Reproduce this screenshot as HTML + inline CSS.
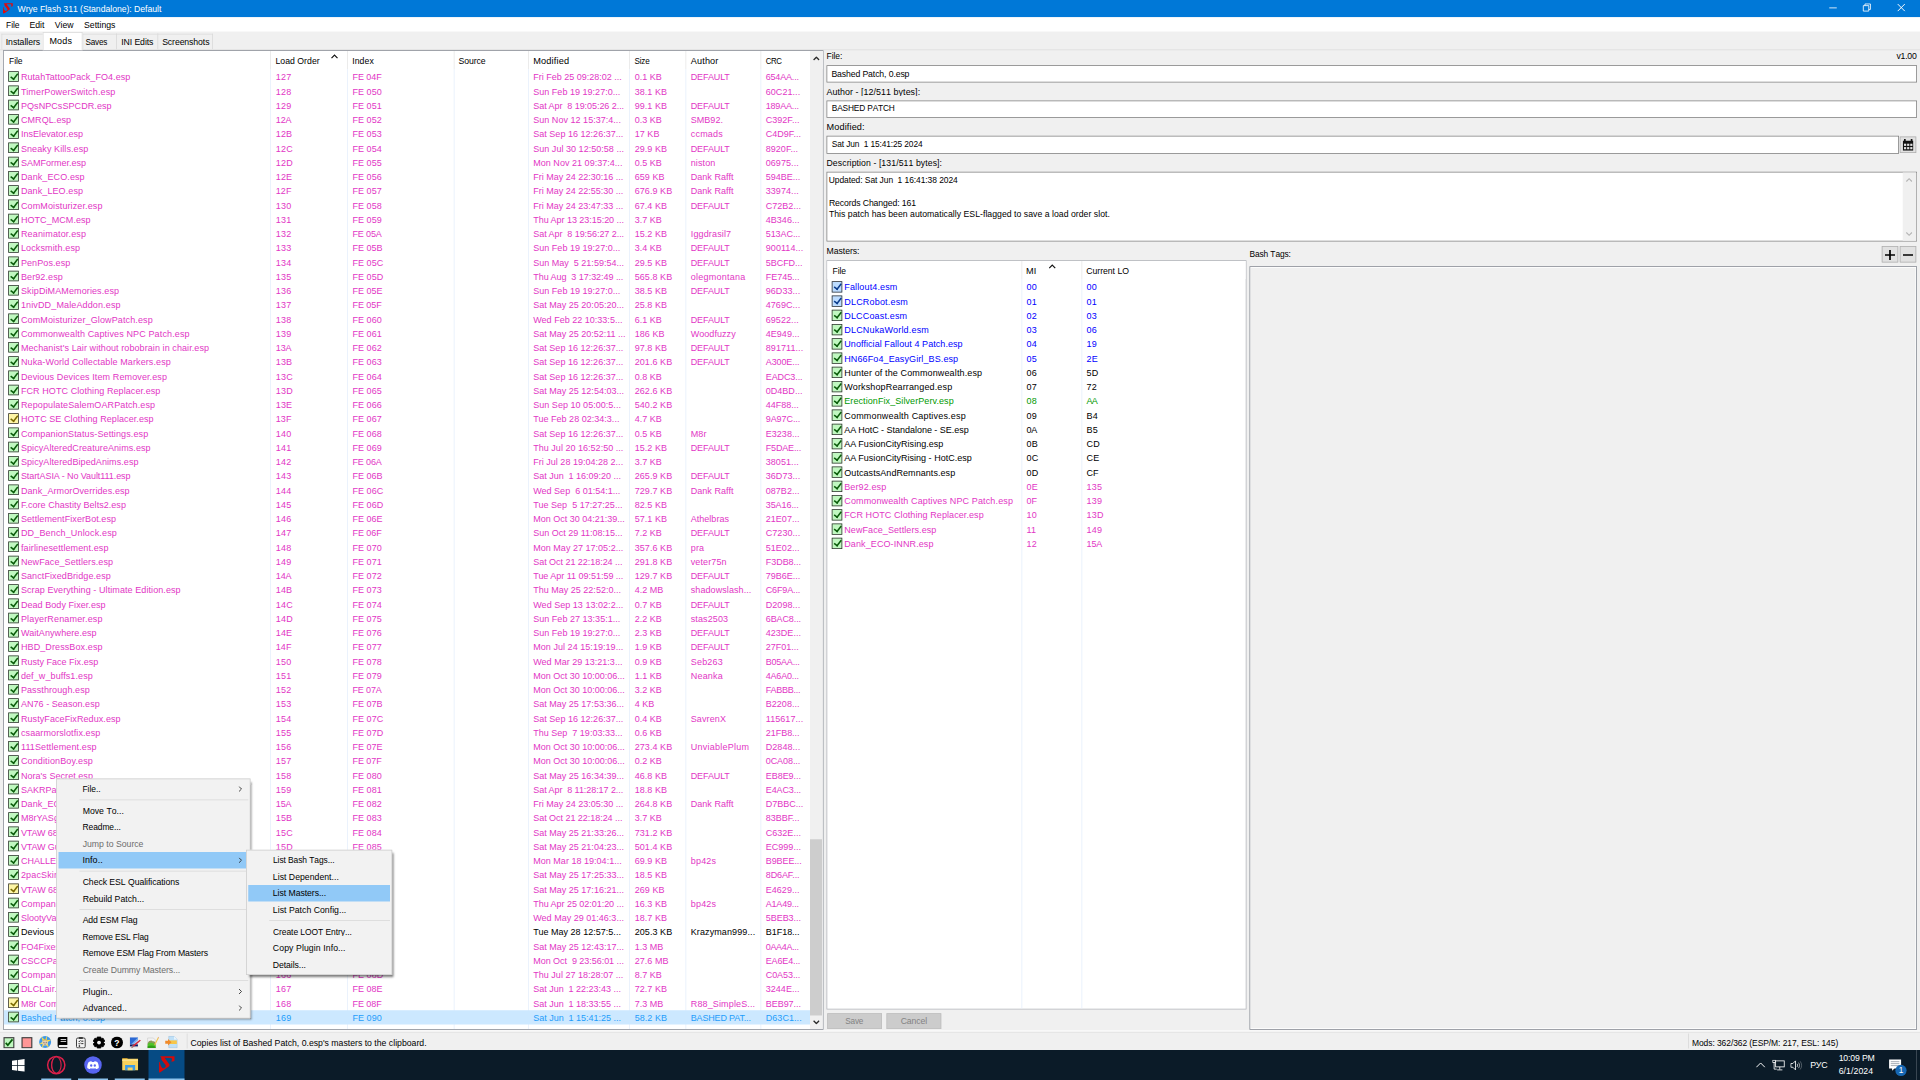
<!DOCTYPE html><html><head><meta charset="utf-8"><title>Wrye Flash 311 (Standalone): Default</title><style>
*{box-sizing:border-box;margin:0;padding:0}
html,body{width:1920px;height:1080px;overflow:hidden;background:#f0f0f0}
body{font-family:"Liberation Sans",sans-serif;font-size:11.6px;color:#000;font-kerning:none;font-variant-ligatures:none}
#root{position:absolute;left:0;top:0;width:2560px;height:1440px;transform:scale(.75);transform-origin:0 0;background:#f0f0f0;overflow:hidden}
.a{position:absolute;white-space:pre}
.t{position:absolute;white-space:pre;line-height:16px;height:16px}
#title{left:0;top:0;width:2560px;height:23px;background:#0078d7}
#title .t{color:#fff}
#menubar{left:0;top:23px;width:2560px;height:18.6px;background:#fff}
.tab{position:absolute;top:45.4px;height:21px;background:#f0f0f0;border:1px solid #d9d9d9;border-bottom:0}
.tab.sel{top:43.4px;height:24px;background:#fff;border-color:#d9d9d9;z-index:2}
#page{left:0;top:66px;width:2560px;height:1308px;border-top:1px solid #dadada;background:#f0f0f0}
.lv{position:absolute;background:#fff;border:1px solid #828790;overflow:hidden}
.lf{font-size:12px;font-kerning:normal}
.hd{position:absolute;left:0;top:0;height:24px;right:0;background:#fff}
.vs{position:absolute;top:0;width:1px;background:#e5e5e5;height:24px}
.vl{position:absolute;top:24px;bottom:0;width:1px;background:#e4eefb}
.r{position:absolute;left:0;height:19px;line-height:19px;white-space:pre;color:#e236c5}
.r b{position:absolute;font-weight:normal;top:.8px}
.r.k{color:#000}
.r.s{color:#1e9dfb}
.selbg{position:absolute;left:0;height:19px;background:#cce8ff}
.cb{position:absolute;left:5.5px;top:2.1px;width:14px;height:14.2px;border:1.6px solid #2e2e2e;background:#c0f8c0}
.cb:after{content:"";position:absolute;left:4.3px;top:-.3px;width:3.8px;height:8.2px;border:solid #0a5c0a;border-width:0 2.3px 2.3px 0;transform:rotate(38deg)}
.cb.y{background:#fdf5a6}
.cb.y:after{border-color:#7a6a00}
.cb.bl{background:#bcdcff}
.cb.bl:after{border-color:#0a3c8c}
.inp{position:absolute;background:#fff;border:1px solid #7a7a7a;height:23px}
.btn{position:absolute;background:#e1e1e1;border:1px solid #adadad}
.btn.dis{background:#ccc;border-color:#bfbfbf;color:#838383}
.menu{position:absolute;background:#f2f2f2;border:1px solid #ccc;box-shadow:3.5px 3.5px 3px -1px rgba(0,0,0,.55);z-index:20}
.mi{position:absolute;left:2px;right:2px;height:22px}
.mi.hl{background:#91c9f7}
.mi.dis .t{color:#6d6d6d}
.msep{position:absolute;left:30px;right:2px;height:1px;background:#d7d7d7}
.arr{position:absolute;right:8px;top:7px;width:5px;height:8px}
#status{left:0;top:1374px;width:2560px;height:26px;background:#f0f0f0;border-top:1.2px solid #fff}
#status:before{content:"";position:absolute;left:0;right:0;top:.7px;height:1.6px;background:#e3e3e3}
.ssep{position:absolute;top:3px;width:1px;height:20px;background:#d7d7d7}
#taskbar{left:0;top:1400px;width:2560px;height:40px;background:#0b1b28}
#taskbar .t{color:#fff}
.ul{position:absolute;top:37.8px;height:2.2px;background:#8ec5ee}
</style></head><body><div id="root">
<div id="title" class="a">
<svg class="a" style="left:3.600px;top:3.600px" width="13.800" height="14.500" viewBox="0 0 21.300 22.400"><path d="M1.5 .5L20.9 .3L20.9 6.2C19.5 7.2 17.5 7.5 15.9 7.4C17.3 6.3 17.8 4.6 16.7 2.6L7.4 2.4L13.9 11.3C14.2 12.2 14 13 13.5 13.6L.8 22.4L0 21.3L.2 8L1.1 8C1.6 11.5 2.6 14 4.1 15.7C5 16.6 5.8 16.6 6.3 16.3C7.8 15.6 8.6 14.8 8.9 13.9C9.1 13.2 9 12.400 8.500 11.700L3.700 5.700C3.100 4.600 2.900 3.500 3 2.400Z" fill="#e00b0b"/></svg>
<div class="t" style="left:23.3px;top:3.5px;letter-spacing:-.06px;">Wrye Flash 311 (Standalone): Default</div>
<svg class="a" style="left:2422px;top:0" width="138" height="23" viewBox="0 0 138 23"><g stroke="#fff" stroke-width="1.100" fill="none"><path d="M17 10.500h10"/><path d="M62.400 7.500h7.300v7.300h-7.300z M64.600 7.500v-2.200h7.300v7.300h-2.200"/><path d="M108.300 5.400l9.400 9.400m0 -9.400l-9.400 9.400" stroke-width="1.300"/></g></svg>
</div>
<div id="menubar" class="a">
<div class="t" style="left:7.5px;top:2px;letter-spacing:-.07px;transform:scaleX(0.978);transform-origin:0 0;">File</div>
<div class="t" style="left:39.2px;top:2px;letter-spacing:0px;">Edit</div>
<div class="t" style="left:73px;top:2px;letter-spacing:-.04px;">View</div>
<div class="t" style="left:112px;top:2px;letter-spacing:.01px;">Settings</div>
</div>
<div class="tab" style="left:2px;width:57.5px">
<div class="t" style="left:4.6px;top:1.5px;letter-spacing:-.04px;">Installers</div>
</div>
<div class="tab sel" style="left:56.5px;width:53.4px">
<div class="t" style="left:8.5px;top:1.9px;letter-spacing:.16px;transform:scaleX(1.035);transform-origin:0 0;">Mods</div>
</div>
<div class="tab" style="left:109.8px;width:46.5px">
<div class="t" style="left:3.6px;top:1.5px;letter-spacing:-.28px;transform:scaleX(0.940);transform-origin:0 0;">Saves</div>
</div>
<div class="tab" style="left:155px;width:56px">
<div class="t" style="left:5.5px;top:1.5px;letter-spacing:-.09px;">INI Edits</div>
</div>
<div class="tab" style="left:209.7px;width:74.8px">
<div class="t" style="left:5.5px;top:1.5px;letter-spacing:-.13px;">Screenshots</div>
</div>
<div id="page" class="a"></div>
<div class="lv" style="left:4.4px;top:67px;width:1093.4px;height:1305.7px">
<div class="hd">
<div class="t" style="left:6.8px;top:4.8px;letter-spacing:-.07px;transform:scaleX(0.978);transform-origin:0 0;">File</div>
<div class="t" style="left:361.9px;top:4.8px;letter-spacing:.03px;">Load Order</div>
<div class="t" style="left:464.2px;top:4.8px;letter-spacing:.12px;">Index</div>
<div class="t" style="left:605.9px;top:4.8px;letter-spacing:-.12px;">Source</div>
<div class="t" style="left:705.2px;top:4.8px;letter-spacing:.2px;transform:scaleX(1.057);transform-origin:0 0;">Modified</div>
<div class="t" style="left:840.5px;top:4.8px;letter-spacing:-.27px;transform:scaleX(0.932);transform-origin:0 0;">Size</div>
<div class="t" style="left:915.2px;top:4.8px;letter-spacing:.18px;transform:scaleX(1.050);transform-origin:0 0;">Author</div>
<div class="t" style="left:1015.2px;top:4.8px;letter-spacing:-.61px;transform:scaleX(0.901);transform-origin:0 0;">CRC</div>
<div class="vs" style="left:354.6px"></div>
<div class="vs" style="left:457.6px"></div>
<div class="vs" style="left:599.3px"></div>
<div class="vs" style="left:698.6px"></div>
<div class="vs" style="left:833.9px"></div>
<div class="vs" style="left:908.6px"></div>
<div class="vs" style="left:1008.6px"></div>
<svg class="a" style="left:435.6px;top:4px" width="10" height="7" viewBox="0 0 10 7"><path d="M1 5.400L5 1.400L9 5.400" fill="none" stroke="#111" stroke-width="1.600"/></svg>
</div>
<div class="vl" style="left:354.6px"></div>
<div class="vl" style="left:457.6px"></div>
<div class="vl" style="left:599.3px"></div>
<div class="vl" style="left:698.6px"></div>
<div class="vl" style="left:833.9px"></div>
<div class="vl" style="left:908.6px"></div>
<div class="vl" style="left:1008.6px"></div>
<div class="r lf" style="top:25px"><i class="cb"></i>
<b style="left:22.5px;letter-spacing:.08px">RutahTattooPack_FO4.esp</b>
<b style="left:362.3px;letter-spacing:.32px">127</b>
<b style="left:464.6px;letter-spacing:-.06px">FE 04F</b>
<b style="left:705.6px;letter-spacing:-0px">Fri Feb 25 09:28:02 ...</b>
<b style="left:840.9px;letter-spacing:-.01px">0.1 KB</b>
<b style="left:915.6px;letter-spacing:-.16px">DEFAULT</b>
<b style="left:1015.6px;letter-spacing:-.25px">654AA...</b>
</div>
<div class="r lf" style="top:44px"><i class="cb"></i>
<b style="left:22.5px;letter-spacing:.19px">TimerPowerSwitch.esp</b>
<b style="left:362.3px;letter-spacing:.32px">128</b>
<b style="left:464.6px;letter-spacing:.05px">FE 050</b>
<b style="left:705.6px;letter-spacing:.03px">Sun Feb 19 19:27:0...</b>
<b style="left:840.9px;letter-spacing:.04px">38.1 KB</b>
<b style="left:1015.6px;letter-spacing:.08px">60C21...</b>
</div>
<div class="r lf" style="top:63px"><i class="cb"></i>
<b style="left:22.5px;letter-spacing:.1px">PQsNPCsSPCDR.esp</b>
<b style="left:362.3px;letter-spacing:.32px">129</b>
<b style="left:464.6px;letter-spacing:.05px">FE 051</b>
<b style="left:705.6px;letter-spacing:-.07px">Sat Apr  8 19:05:26 2...</b>
<b style="left:840.9px;letter-spacing:.04px">99.1 KB</b>
<b style="left:915.6px;letter-spacing:-.16px">DEFAULT</b>
<b style="left:1015.6px;letter-spacing:-.25px">189AA...</b>
</div>
<div class="r lf" style="top:82px"><i class="cb"></i>
<b style="left:22.5px;letter-spacing:.11px">CMRQL.esp</b>
<b style="left:362.3px;letter-spacing:-.12px">12A</b>
<b style="left:464.6px;letter-spacing:.05px">FE 052</b>
<b style="left:705.6px;letter-spacing:.04px">Sun Nov 12 15:37:4...</b>
<b style="left:840.9px;letter-spacing:-.01px">0.3 KB</b>
<b style="left:915.6px;letter-spacing:.05px">SMB92.</b>
<b style="left:1015.6px;letter-spacing:.04px">C392F...</b>
</div>
<div class="r lf" style="top:101px"><i class="cb"></i>
<b style="left:22.5px;letter-spacing:.06px">InsElevator.esp</b>
<b style="left:362.3px;letter-spacing:.21px">12B</b>
<b style="left:464.6px;letter-spacing:.05px">FE 053</b>
<b style="left:705.6px;letter-spacing:.03px">Sat Sep 16 12:26:37...</b>
<b style="left:840.9px;letter-spacing:.06px">17 KB</b>
<b style="left:915.6px;letter-spacing:.28px">ccmads</b>
<b style="left:1015.6px;letter-spacing:.04px">C4D9F...</b>
</div>
<div class="r lf" style="top:120px"><i class="cb"></i>
<b style="left:22.5px;letter-spacing:.12px">Sneaky Kills.esp</b>
<b style="left:362.3px;letter-spacing:.33px">12C</b>
<b style="left:464.6px;letter-spacing:.05px">FE 054</b>
<b style="left:705.6px;letter-spacing:.04px">Sun Jul 30 12:50:58 ...</b>
<b style="left:840.9px;letter-spacing:.04px">29.9 KB</b>
<b style="left:915.6px;letter-spacing:-.16px">DEFAULT</b>
<b style="left:1015.6px;letter-spacing:.04px">8920F...</b>
</div>
<div class="r lf" style="top:139px"><i class="cb"></i>
<b style="left:22.5px;letter-spacing:.02px">SAMFormer.esp</b>
<b style="left:362.3px;letter-spacing:.33px">12D</b>
<b style="left:464.6px;letter-spacing:.05px">FE 055</b>
<b style="left:705.6px;letter-spacing:.04px">Mon Nov 21 09:37:4...</b>
<b style="left:840.9px;letter-spacing:-.01px">0.5 KB</b>
<b style="left:915.6px;letter-spacing:.16px">niston</b>
<b style="left:1015.6px;letter-spacing:.08px">06975...</b>
</div>
<div class="r lf" style="top:158px"><i class="cb"></i>
<b style="left:22.5px;letter-spacing:.14px">Dank_ECO.esp</b>
<b style="left:362.3px;letter-spacing:.21px">12E</b>
<b style="left:464.6px;letter-spacing:.05px">FE 056</b>
<b style="left:705.6px;letter-spacing:-0px">Fri May 24 22:30:16 ...</b>
<b style="left:840.9px;letter-spacing:.1px">659 KB</b>
<b style="left:915.6px;letter-spacing:.05px">Dank Rafft</b>
<b style="left:1015.6px;letter-spacing:-0px">594BE...</b>
</div>
<div class="r lf" style="top:177px"><i class="cb"></i>
<b style="left:22.5px;letter-spacing:.13px">Dank_LEO.esp</b>
<b style="left:362.3px;letter-spacing:.1px">12F</b>
<b style="left:464.6px;letter-spacing:.05px">FE 057</b>
<b style="left:705.6px;letter-spacing:-0px">Fri May 24 22:55:30 ...</b>
<b style="left:840.9px;letter-spacing:.08px">676.9 KB</b>
<b style="left:915.6px;letter-spacing:.05px">Dank Rafft</b>
<b style="left:1015.6px;letter-spacing:.08px">33974...</b>
</div>
<div class="r lf" style="top:196px"><i class="cb"></i>
<b style="left:22.5px;letter-spacing:.16px">ComMoisturizer.esp</b>
<b style="left:362.3px;letter-spacing:.32px">130</b>
<b style="left:464.6px;letter-spacing:.05px">FE 058</b>
<b style="left:705.6px;letter-spacing:-0px">Fri May 24 23:47:33 ...</b>
<b style="left:840.9px;letter-spacing:.04px">67.4 KB</b>
<b style="left:915.6px;letter-spacing:-.16px">DEFAULT</b>
<b style="left:1015.6px;letter-spacing:.04px">C72B2...</b>
</div>
<div class="r lf" style="top:215px"><i class="cb"></i>
<b style="left:22.5px;letter-spacing:.08px">HOTC_MCM.esp</b>
<b style="left:362.3px;letter-spacing:.32px">131</b>
<b style="left:464.6px;letter-spacing:.05px">FE 059</b>
<b style="left:705.6px;letter-spacing:-.05px">Thu Apr 13 23:15:20 ...</b>
<b style="left:840.9px;letter-spacing:-.01px">3.7 KB</b>
<b style="left:1015.6px;letter-spacing:.04px">4B346...</b>
</div>
<div class="r lf" style="top:234px"><i class="cb"></i>
<b style="left:22.5px;letter-spacing:.21px">Reanimator.esp</b>
<b style="left:362.3px;letter-spacing:.32px">132</b>
<b style="left:464.6px;letter-spacing:-.17px">FE 05A</b>
<b style="left:705.6px;letter-spacing:-.07px">Sat Apr  8 19:56:27 2...</b>
<b style="left:840.9px;letter-spacing:.04px">15.2 KB</b>
<b style="left:915.6px;letter-spacing:.2px">Iggdrasil7</b>
<b style="left:1015.6px;letter-spacing:-.09px">513AC...</b>
</div>
<div class="r lf" style="top:253px"><i class="cb"></i>
<b style="left:22.5px;letter-spacing:.18px">Locksmith.esp</b>
<b style="left:362.3px;letter-spacing:.32px">133</b>
<b style="left:464.6px;letter-spacing:-.01px">FE 05B</b>
<b style="left:705.6px;letter-spacing:.03px">Sun Feb 19 19:27:0...</b>
<b style="left:840.9px;letter-spacing:-.01px">3.4 KB</b>
<b style="left:915.6px;letter-spacing:-.16px">DEFAULT</b>
<b style="left:1015.6px;letter-spacing:.09px">900114...</b>
</div>
<div class="r lf" style="top:272px"><i class="cb"></i>
<b style="left:22.5px;letter-spacing:.13px">PenPos.esp</b>
<b style="left:362.3px;letter-spacing:.32px">134</b>
<b style="left:464.6px;letter-spacing:.05px">FE 05C</b>
<b style="left:705.6px;letter-spacing:.01px">Sun May  5 21:59:54...</b>
<b style="left:840.9px;letter-spacing:.04px">29.5 KB</b>
<b style="left:915.6px;letter-spacing:-.16px">DEFAULT</b>
<b style="left:1015.6px;letter-spacing:-.04px">5BCFD...</b>
</div>
<div class="r lf" style="top:291px"><i class="cb"></i>
<b style="left:22.5px;letter-spacing:.14px">Ber92.esp</b>
<b style="left:362.3px;letter-spacing:.32px">135</b>
<b style="left:464.6px;letter-spacing:.05px">FE 05D</b>
<b style="left:705.6px;letter-spacing:-.06px">Thu Aug  3 17:32:49 ...</b>
<b style="left:840.9px;letter-spacing:.08px">565.8 KB</b>
<b style="left:915.6px;letter-spacing:.33px">olegmontana</b>
<b style="left:1015.6px;letter-spacing:-.04px">FE745...</b>
</div>
<div class="r lf" style="top:310px"><i class="cb"></i>
<b style="left:22.5px;letter-spacing:.15px">SkipDiMAMemories.esp</b>
<b style="left:362.3px;letter-spacing:.32px">136</b>
<b style="left:464.6px;letter-spacing:-.01px">FE 05E</b>
<b style="left:705.6px;letter-spacing:.03px">Sun Feb 19 19:27:0...</b>
<b style="left:840.9px;letter-spacing:.04px">38.5 KB</b>
<b style="left:915.6px;letter-spacing:-.16px">DEFAULT</b>
<b style="left:1015.6px;letter-spacing:.08px">96D33...</b>
</div>
<div class="r lf" style="top:329px"><i class="cb"></i>
<b style="left:22.5px;letter-spacing:.18px">1nivDD_MaleAddon.esp</b>
<b style="left:362.3px;letter-spacing:.32px">137</b>
<b style="left:464.6px;letter-spacing:-.06px">FE 05F</b>
<b style="left:705.6px;letter-spacing:.01px">Sat May 25 20:05:20...</b>
<b style="left:840.9px;letter-spacing:.04px">25.8 KB</b>
<b style="left:1015.6px;letter-spacing:.08px">4769C...</b>
</div>
<div class="r lf" style="top:348px"><i class="cb"></i>
<b style="left:22.5px;letter-spacing:.16px">ComMoisturizer_GlowPatch.esp</b>
<b style="left:362.3px;letter-spacing:.32px">138</b>
<b style="left:464.6px;letter-spacing:.05px">FE 060</b>
<b style="left:705.6px;letter-spacing:.02px">Wed Feb 22 10:33:5...</b>
<b style="left:840.9px;letter-spacing:-.01px">6.1 KB</b>
<b style="left:915.6px;letter-spacing:-.16px">DEFAULT</b>
<b style="left:1015.6px;letter-spacing:.08px">69522...</b>
</div>
<div class="r lf" style="top:367px"><i class="cb"></i>
<b style="left:22.5px;letter-spacing:.18px">Commonwealth Captives NPC Patch.esp</b>
<b style="left:362.3px;letter-spacing:.32px">139</b>
<b style="left:464.6px;letter-spacing:.05px">FE 061</b>
<b style="left:705.6px;letter-spacing:-.01px">Sat May 25 20:52:11 ...</b>
<b style="left:840.9px;letter-spacing:.1px">186 KB</b>
<b style="left:915.6px;letter-spacing:.1px">Woodfuzzy</b>
<b style="left:1015.6px;letter-spacing:.04px">4E949...</b>
</div>
<div class="r lf" style="top:386px"><i class="cb"></i>
<b style="left:22.5px;letter-spacing:.11px">Mechanist&#x27;s Lair without robobrain in chair.esp</b>
<b style="left:362.3px;letter-spacing:-.12px">13A</b>
<b style="left:464.6px;letter-spacing:.05px">FE 062</b>
<b style="left:705.6px;letter-spacing:.03px">Sat Sep 16 12:26:37...</b>
<b style="left:840.9px;letter-spacing:.04px">97.8 KB</b>
<b style="left:915.6px;letter-spacing:-.16px">DEFAULT</b>
<b style="left:1015.6px;letter-spacing:.09px">891711...</b>
</div>
<div class="r lf" style="top:405px"><i class="cb"></i>
<b style="left:22.5px;letter-spacing:.14px">Nuka-World Collectable Markers.esp</b>
<b style="left:362.3px;letter-spacing:.21px">13B</b>
<b style="left:464.6px;letter-spacing:.05px">FE 063</b>
<b style="left:705.6px;letter-spacing:.03px">Sat Sep 16 12:26:37...</b>
<b style="left:840.9px;letter-spacing:.08px">201.6 KB</b>
<b style="left:915.6px;letter-spacing:-.16px">DEFAULT</b>
<b style="left:1015.6px;letter-spacing:-.13px">A300E...</b>
</div>
<div class="r lf" style="top:424px"><i class="cb"></i>
<b style="left:22.5px;letter-spacing:.15px">Devious Devices Item Remover.esp</b>
<b style="left:362.3px;letter-spacing:.33px">13C</b>
<b style="left:464.6px;letter-spacing:.05px">FE 064</b>
<b style="left:705.6px;letter-spacing:.03px">Sat Sep 16 12:26:37...</b>
<b style="left:840.9px;letter-spacing:-.01px">0.8 KB</b>
<b style="left:1015.6px;letter-spacing:-.13px">EADC3...</b>
</div>
<div class="r lf" style="top:443px"><i class="cb"></i>
<b style="left:22.5px;letter-spacing:.11px">FCR HOTC Clothing Replacer.esp</b>
<b style="left:362.3px;letter-spacing:.33px">13D</b>
<b style="left:464.6px;letter-spacing:.05px">FE 065</b>
<b style="left:705.6px;letter-spacing:.01px">Sat May 25 12:54:03...</b>
<b style="left:840.9px;letter-spacing:.08px">262.6 KB</b>
<b style="left:1015.6px;letter-spacing:.04px">0D4BD...</b>
</div>
<div class="r lf" style="top:462px"><i class="cb"></i>
<b style="left:22.5px;letter-spacing:.16px">RepopulateSalemOARPatch.esp</b>
<b style="left:362.3px;letter-spacing:.21px">13E</b>
<b style="left:464.6px;letter-spacing:.05px">FE 066</b>
<b style="left:705.6px;letter-spacing:.04px">Sun Sep 10 05:00:5...</b>
<b style="left:840.9px;letter-spacing:.08px">540.2 KB</b>
<b style="left:1015.6px;letter-spacing:-0px">44F88...</b>
</div>
<div class="r lf" style="top:481px"><i class="cb y"></i>
<b style="left:22.5px;letter-spacing:.1px">HOTC SE Clothing Replacer.esp</b>
<b style="left:362.3px;letter-spacing:.1px">13F</b>
<b style="left:464.6px;letter-spacing:.05px">FE 067</b>
<b style="left:705.6px;letter-spacing:.03px">Tue Feb 28 02:34:3...</b>
<b style="left:840.9px;letter-spacing:-.01px">4.7 KB</b>
<b style="left:1015.6px;letter-spacing:-.09px">9A97C...</b>
</div>
<div class="r lf" style="top:500px"><i class="cb"></i>
<b style="left:22.5px;letter-spacing:.16px">CompanionStatus-Settings.esp</b>
<b style="left:362.3px;letter-spacing:.32px">140</b>
<b style="left:464.6px;letter-spacing:.05px">FE 068</b>
<b style="left:705.6px;letter-spacing:.03px">Sat Sep 16 12:26:37...</b>
<b style="left:840.9px;letter-spacing:-.01px">0.5 KB</b>
<b style="left:915.6px;letter-spacing:.11px">M8r</b>
<b style="left:1015.6px;letter-spacing:.04px">E3238...</b>
</div>
<div class="r lf" style="top:519px"><i class="cb"></i>
<b style="left:22.5px;letter-spacing:.1px">SpicyAlteredCreatureAnims.esp</b>
<b style="left:362.3px;letter-spacing:.32px">141</b>
<b style="left:464.6px;letter-spacing:.05px">FE 069</b>
<b style="left:705.6px;letter-spacing:.03px">Thu Jul 20 16:52:50 ...</b>
<b style="left:840.9px;letter-spacing:.04px">15.2 KB</b>
<b style="left:915.6px;letter-spacing:-.16px">DEFAULT</b>
<b style="left:1015.6px;letter-spacing:-.21px">F5DAE...</b>
</div>
<div class="r lf" style="top:538px"><i class="cb"></i>
<b style="left:22.5px;letter-spacing:.11px">SpicyAlteredBipedAnims.esp</b>
<b style="left:362.3px;letter-spacing:.32px">142</b>
<b style="left:464.6px;letter-spacing:-.17px">FE 06A</b>
<b style="left:705.6px;letter-spacing:.02px">Fri Jul 28 19:04:28 2...</b>
<b style="left:840.9px;letter-spacing:-.01px">3.7 KB</b>
<b style="left:1015.6px;letter-spacing:.08px">38051...</b>
</div>
<div class="r lf" style="top:557px"><i class="cb"></i>
<b style="left:22.5px;letter-spacing:-.1px">StartASIA - No Vault111.esp</b>
<b style="left:362.3px;letter-spacing:.32px">143</b>
<b style="left:464.6px;letter-spacing:-.01px">FE 06B</b>
<b style="left:705.6px;letter-spacing:-.02px">Sat Jun  1 16:09:20 ...</b>
<b style="left:840.9px;letter-spacing:.08px">265.9 KB</b>
<b style="left:915.6px;letter-spacing:-.16px">DEFAULT</b>
<b style="left:1015.6px;letter-spacing:.08px">36D73...</b>
</div>
<div class="r lf" style="top:576px"><i class="cb"></i>
<b style="left:22.5px;letter-spacing:.13px">Dank_ArmorOverrides.esp</b>
<b style="left:362.3px;letter-spacing:.32px">144</b>
<b style="left:464.6px;letter-spacing:.05px">FE 06C</b>
<b style="left:705.6px;letter-spacing:.01px">Wed Sep  6 01:54:1...</b>
<b style="left:840.9px;letter-spacing:.08px">729.7 KB</b>
<b style="left:915.6px;letter-spacing:.05px">Dank Rafft</b>
<b style="left:1015.6px;letter-spacing:.04px">087B2...</b>
</div>
<div class="r lf" style="top:595px"><i class="cb"></i>
<b style="left:22.5px;letter-spacing:.05px">F.core Chastity Belts2.esp</b>
<b style="left:362.3px;letter-spacing:.32px">145</b>
<b style="left:464.6px;letter-spacing:.05px">FE 06D</b>
<b style="left:705.6px;letter-spacing:.03px">Tue Sep  5 17:27:25...</b>
<b style="left:840.9px;letter-spacing:.04px">82.5 KB</b>
<b style="left:1015.6px;letter-spacing:-.09px">35A16...</b>
</div>
<div class="r lf" style="top:614px"><i class="cb"></i>
<b style="left:22.5px;letter-spacing:.1px">SettlementFixerBot.esp</b>
<b style="left:362.3px;letter-spacing:.32px">146</b>
<b style="left:464.6px;letter-spacing:-.01px">FE 06E</b>
<b style="left:705.6px;letter-spacing:-0px">Mon Oct 30 04:21:39...</b>
<b style="left:840.9px;letter-spacing:.04px">57.1 KB</b>
<b style="left:915.6px;letter-spacing:.03px">Athelbras</b>
<b style="left:1015.6px;letter-spacing:.04px">21E07...</b>
</div>
<div class="r lf" style="top:633px"><i class="cb"></i>
<b style="left:22.5px;letter-spacing:.21px">DD_Bench_Unlock.esp</b>
<b style="left:362.3px;letter-spacing:.32px">147</b>
<b style="left:464.6px;letter-spacing:-.06px">FE 06F</b>
<b style="left:705.6px;letter-spacing:-.01px">Sun Oct 29 11:08:15...</b>
<b style="left:840.9px;letter-spacing:-.01px">7.2 KB</b>
<b style="left:915.6px;letter-spacing:-.16px">DEFAULT</b>
<b style="left:1015.6px;letter-spacing:.08px">C7230...</b>
</div>
<div class="r lf" style="top:652px"><i class="cb"></i>
<b style="left:22.5px;letter-spacing:.16px">fairlinesettlement.esp</b>
<b style="left:362.3px;letter-spacing:.32px">148</b>
<b style="left:464.6px;letter-spacing:.05px">FE 070</b>
<b style="left:705.6px;letter-spacing:.03px">Mon May 27 17:05:2...</b>
<b style="left:840.9px;letter-spacing:.08px">357.6 KB</b>
<b style="left:915.6px;letter-spacing:.22px">pra</b>
<b style="left:1015.6px;letter-spacing:.04px">51E02...</b>
</div>
<div class="r lf" style="top:671px"><i class="cb"></i>
<b style="left:22.5px;letter-spacing:.11px">NewFace_Settlers.esp</b>
<b style="left:362.3px;letter-spacing:.32px">149</b>
<b style="left:464.6px;letter-spacing:.05px">FE 071</b>
<b style="left:705.6px;letter-spacing:-.05px">Sat Oct 21 22:18:24 ...</b>
<b style="left:840.9px;letter-spacing:.08px">291.8 KB</b>
<b style="left:915.6px;letter-spacing:.16px">veter75n</b>
<b style="left:1015.6px;letter-spacing:-.04px">F3DB8...</b>
</div>
<div class="r lf" style="top:690px"><i class="cb"></i>
<b style="left:22.5px;letter-spacing:.13px">SanctFixedBridge.esp</b>
<b style="left:362.3px;letter-spacing:-.12px">14A</b>
<b style="left:464.6px;letter-spacing:.05px">FE 072</b>
<b style="left:705.6px;letter-spacing:-.03px">Tue Apr 11 09:51:59 ...</b>
<b style="left:840.9px;letter-spacing:.08px">129.7 KB</b>
<b style="left:915.6px;letter-spacing:-.16px">DEFAULT</b>
<b style="left:1015.6px;letter-spacing:-0px">79B6E...</b>
</div>
<div class="r lf" style="top:709px"><i class="cb"></i>
<b style="left:22.5px;letter-spacing:.11px">Scrap Everything - Ultimate Edition.esp</b>
<b style="left:362.3px;letter-spacing:.21px">14B</b>
<b style="left:464.6px;letter-spacing:.05px">FE 073</b>
<b style="left:705.6px;letter-spacing:.01px">Thu May 25 22:52:0...</b>
<b style="left:840.9px;letter-spacing:-0px">4.2 MB</b>
<b style="left:915.6px;letter-spacing:.11px">shadowslash...</b>
<b style="left:1015.6px;letter-spacing:-.17px">C6F9A...</b>
</div>
<div class="r lf" style="top:728px"><i class="cb"></i>
<b style="left:22.5px;letter-spacing:.08px">Dead Body Fixer.esp</b>
<b style="left:362.3px;letter-spacing:.33px">14C</b>
<b style="left:464.6px;letter-spacing:.05px">FE 074</b>
<b style="left:705.6px;letter-spacing:.04px">Wed Sep 13 13:02:2...</b>
<b style="left:840.9px;letter-spacing:-.01px">0.7 KB</b>
<b style="left:915.6px;letter-spacing:-.16px">DEFAULT</b>
<b style="left:1015.6px;letter-spacing:.08px">D2098...</b>
</div>
<div class="r lf" style="top:747px"><i class="cb"></i>
<b style="left:22.5px;letter-spacing:.21px">PlayerRenamer.esp</b>
<b style="left:362.3px;letter-spacing:.33px">14D</b>
<b style="left:464.6px;letter-spacing:.05px">FE 075</b>
<b style="left:705.6px;letter-spacing:.03px">Sun Feb 27 13:35:1...</b>
<b style="left:840.9px;letter-spacing:-.01px">2.2 KB</b>
<b style="left:915.6px;letter-spacing:.16px">stas2503</b>
<b style="left:1015.6px;letter-spacing:-.13px">6BAC8...</b>
</div>
<div class="r lf" style="top:766px"><i class="cb"></i>
<b style="left:22.5px;letter-spacing:.09px">WaitAnywhere.esp</b>
<b style="left:362.3px;letter-spacing:.21px">14E</b>
<b style="left:464.6px;letter-spacing:.05px">FE 076</b>
<b style="left:705.6px;letter-spacing:.03px">Sun Feb 19 19:27:0...</b>
<b style="left:840.9px;letter-spacing:-.01px">2.3 KB</b>
<b style="left:915.6px;letter-spacing:-.16px">DEFAULT</b>
<b style="left:1015.6px;letter-spacing:.04px">423DE...</b>
</div>
<div class="r lf" style="top:785px"><i class="cb"></i>
<b style="left:22.5px;letter-spacing:.14px">HBD_DressBox.esp</b>
<b style="left:362.3px;letter-spacing:.1px">14F</b>
<b style="left:464.6px;letter-spacing:.05px">FE 077</b>
<b style="left:705.6px;letter-spacing:.06px">Mon Jul 24 15:19:19...</b>
<b style="left:840.9px;letter-spacing:-.01px">1.9 KB</b>
<b style="left:915.6px;letter-spacing:-.16px">DEFAULT</b>
<b style="left:1015.6px;letter-spacing:-0px">27F01...</b>
</div>
<div class="r lf" style="top:804px"><i class="cb"></i>
<b style="left:22.5px;letter-spacing:.02px">Rusty Face Fix.esp</b>
<b style="left:362.3px;letter-spacing:.32px">150</b>
<b style="left:464.6px;letter-spacing:.05px">FE 078</b>
<b style="left:705.6px;letter-spacing:.02px">Wed Mar 29 13:21:3...</b>
<b style="left:840.9px;letter-spacing:-.01px">0.9 KB</b>
<b style="left:915.6px;letter-spacing:.27px">Seb263</b>
<b style="left:1015.6px;letter-spacing:-.3px">B05AA...</b>
</div>
<div class="r lf" style="top:823px"><i class="cb"></i>
<b style="left:22.5px;letter-spacing:.13px">def_w_buffs1.esp</b>
<b style="left:362.3px;letter-spacing:.32px">151</b>
<b style="left:464.6px;letter-spacing:.05px">FE 079</b>
<b style="left:705.6px;letter-spacing:-0px">Mon Oct 30 10:00:06...</b>
<b style="left:840.9px;letter-spacing:-.01px">1.1 KB</b>
<b style="left:915.6px;letter-spacing:.27px">Neanka</b>
<b style="left:1015.6px;letter-spacing:-.25px">4A6A0...</b>
</div>
<div class="r lf" style="top:842px"><i class="cb"></i>
<b style="left:22.5px;letter-spacing:.13px">Passthrough.esp</b>
<b style="left:362.3px;letter-spacing:.32px">152</b>
<b style="left:464.6px;letter-spacing:-.17px">FE 07A</b>
<b style="left:705.6px;letter-spacing:-0px">Mon Oct 30 10:00:06...</b>
<b style="left:840.9px;letter-spacing:-.01px">3.2 KB</b>
<b style="left:1015.6px;letter-spacing:-.34px">FABBB...</b>
</div>
<div class="r lf" style="top:861px"><i class="cb"></i>
<b style="left:22.5px;letter-spacing:.06px">AN76 - Season.esp</b>
<b style="left:362.3px;letter-spacing:.32px">153</b>
<b style="left:464.6px;letter-spacing:-.01px">FE 07B</b>
<b style="left:705.6px;letter-spacing:.01px">Sat May 25 17:53:36...</b>
<b style="left:840.9px;letter-spacing:-0px">4 KB</b>
<b style="left:1015.6px;letter-spacing:.04px">B2208...</b>
</div>
<div class="r lf" style="top:880px"><i class="cb"></i>
<b style="left:22.5px;letter-spacing:.11px">RustyFaceFixRedux.esp</b>
<b style="left:362.3px;letter-spacing:.32px">154</b>
<b style="left:464.6px;letter-spacing:.05px">FE 07C</b>
<b style="left:705.6px;letter-spacing:.03px">Sat Sep 16 12:26:37...</b>
<b style="left:840.9px;letter-spacing:-.01px">0.4 KB</b>
<b style="left:915.6px;letter-spacing:.14px">SavrenX</b>
<b style="left:1015.6px;letter-spacing:.09px">115617...</b>
</div>
<div class="r lf" style="top:899px"><i class="cb"></i>
<b style="left:22.5px;letter-spacing:.14px">csaarmorslotfix.esp</b>
<b style="left:362.3px;letter-spacing:.32px">155</b>
<b style="left:464.6px;letter-spacing:.05px">FE 07D</b>
<b style="left:705.6px;letter-spacing:.01px">Thu Sep  7 19:03:33...</b>
<b style="left:840.9px;letter-spacing:-.01px">0.6 KB</b>
<b style="left:1015.6px;letter-spacing:-.04px">21FB8...</b>
</div>
<div class="r lf" style="top:918px"><i class="cb"></i>
<b style="left:22.5px;letter-spacing:.16px">111Settlement.esp</b>
<b style="left:362.3px;letter-spacing:.32px">156</b>
<b style="left:464.6px;letter-spacing:-.01px">FE 07E</b>
<b style="left:705.6px;letter-spacing:-0px">Mon Oct 30 10:00:06...</b>
<b style="left:840.9px;letter-spacing:.08px">273.4 KB</b>
<b style="left:915.6px;letter-spacing:.33px">UnviablePlum</b>
<b style="left:1015.6px;letter-spacing:.08px">D2848...</b>
</div>
<div class="r lf" style="top:937px"><i class="cb"></i>
<b style="left:22.5px;letter-spacing:.18px">ConditionBoy.esp</b>
<b style="left:362.3px;letter-spacing:.32px">157</b>
<b style="left:464.6px;letter-spacing:-.06px">FE 07F</b>
<b style="left:705.6px;letter-spacing:-0px">Mon Oct 30 10:00:06...</b>
<b style="left:840.9px;letter-spacing:-.01px">0.2 KB</b>
<b style="left:1015.6px;letter-spacing:-.09px">0CA08...</b>
</div>
<div class="r lf" style="top:956px"><i class="cb"></i>
<b style="left:22.5px;letter-spacing:.06px">Nora&#x27;s Secret.esp</b>
<b style="left:362.3px;letter-spacing:.32px">158</b>
<b style="left:464.6px;letter-spacing:.05px">FE 080</b>
<b style="left:705.6px;letter-spacing:.01px">Sat May 25 16:34:39...</b>
<b style="left:840.9px;letter-spacing:.04px">46.8 KB</b>
<b style="left:915.6px;letter-spacing:-.16px">DEFAULT</b>
<b style="left:1015.6px;letter-spacing:-.05px">EB8E9...</b>
</div>
<div class="r lf" style="top:975px"><i class="cb"></i>
<b style="left:22.5px;letter-spacing:-0px">SAKRPatch.esp</b>
<b style="left:362.3px;letter-spacing:.32px">159</b>
<b style="left:464.6px;letter-spacing:.05px">FE 081</b>
<b style="left:705.6px;letter-spacing:-.08px">Sat Apr  8 11:28:17 2...</b>
<b style="left:840.9px;letter-spacing:.04px">18.8 KB</b>
<b style="left:1015.6px;letter-spacing:-.13px">E4AC3...</b>
</div>
<div class="r lf" style="top:994px"><i class="cb"></i>
<b style="left:22.5px;letter-spacing:.14px">Dank_ECO-INNR.esp</b>
<b style="left:362.3px;letter-spacing:-.12px">15A</b>
<b style="left:464.6px;letter-spacing:.05px">FE 082</b>
<b style="left:705.6px;letter-spacing:-0px">Fri May 24 23:05:30 ...</b>
<b style="left:840.9px;letter-spacing:.08px">264.8 KB</b>
<b style="left:915.6px;letter-spacing:.05px">Dank Rafft</b>
<b style="left:1015.6px;letter-spacing:-0px">D7BBC...</b>
</div>
<div class="r lf" style="top:1013px"><i class="cb"></i>
<b style="left:22.5px;letter-spacing:.03px">M8rYASgSettings.esp</b>
<b style="left:362.3px;letter-spacing:.21px">15B</b>
<b style="left:464.6px;letter-spacing:.05px">FE 083</b>
<b style="left:705.6px;letter-spacing:-.05px">Sat Oct 21 22:18:24 ...</b>
<b style="left:840.9px;letter-spacing:-.01px">3.7 KB</b>
<b style="left:1015.6px;letter-spacing:-.04px">83BBF...</b>
</div>
<div class="r lf" style="top:1032px"><i class="cb"></i>
<b style="left:22.5px;letter-spacing:-.15px">VTAW 68.esp</b>
<b style="left:362.3px;letter-spacing:.33px">15C</b>
<b style="left:464.6px;letter-spacing:.05px">FE 084</b>
<b style="left:705.6px;letter-spacing:.01px">Sat May 25 21:33:26...</b>
<b style="left:840.9px;letter-spacing:.08px">731.2 KB</b>
<b style="left:1015.6px;letter-spacing:.04px">C632E...</b>
</div>
<div class="r lf" style="top:1051px"><i class="cb"></i>
<b style="left:22.5px;letter-spacing:-.17px">VTAW Gun.esp</b>
<b style="left:362.3px;letter-spacing:.33px">15D</b>
<b style="left:464.6px;letter-spacing:.05px">FE 085</b>
<b style="left:705.6px;letter-spacing:.01px">Sat May 25 21:04:23...</b>
<b style="left:840.9px;letter-spacing:.08px">501.4 KB</b>
<b style="left:1015.6px;letter-spacing:.04px">EC999...</b>
</div>
<div class="r lf" style="top:1070px"><i class="cb"></i>
<b style="left:22.5px;letter-spacing:.05px">CHALLENGE.esp</b>
<b style="left:362.3px;letter-spacing:.21px">15E</b>
<b style="left:464.6px;letter-spacing:.05px">FE 086</b>
<b style="left:705.6px;letter-spacing:.03px">Mon Mar 18 19:04:1...</b>
<b style="left:840.9px;letter-spacing:.04px">69.9 KB</b>
<b style="left:915.6px;letter-spacing:.26px">bp42s</b>
<b style="left:1015.6px;letter-spacing:-.09px">B9BEE...</b>
</div>
<div class="r lf" style="top:1089px"><i class="cb"></i>
<b style="left:22.5px;letter-spacing:.2px">2pacSkimpy.esp</b>
<b style="left:362.3px;letter-spacing:.1px">15F</b>
<b style="left:464.6px;letter-spacing:.05px">FE 087</b>
<b style="left:705.6px;letter-spacing:.01px">Sat May 25 17:25:33...</b>
<b style="left:840.9px;letter-spacing:.04px">18.5 KB</b>
<b style="left:1015.6px;letter-spacing:-.13px">8D6AF...</b>
</div>
<div class="r lf" style="top:1108px"><i class="cb y"></i>
<b style="left:22.5px;letter-spacing:-.1px">VTAW 68 Patch.esp</b>
<b style="left:362.3px;letter-spacing:.32px">160</b>
<b style="left:464.6px;letter-spacing:.05px">FE 088</b>
<b style="left:705.6px;letter-spacing:.01px">Sat May 25 17:16:21...</b>
<b style="left:840.9px;letter-spacing:.1px">269 KB</b>
<b style="left:1015.6px;letter-spacing:.04px">E4629...</b>
</div>
<div class="r lf" style="top:1127px"><i class="cb"></i>
<b style="left:22.5px;letter-spacing:.24px">CompanionPatch.esp</b>
<b style="left:362.3px;letter-spacing:.32px">161</b>
<b style="left:464.6px;letter-spacing:.05px">FE 089</b>
<b style="left:705.6px;letter-spacing:-.05px">Thu Apr 25 02:01:20 ...</b>
<b style="left:840.9px;letter-spacing:.04px">16.3 KB</b>
<b style="left:915.6px;letter-spacing:.26px">bp42s</b>
<b style="left:1015.6px;letter-spacing:-.25px">A1A49...</b>
</div>
<div class="r lf" style="top:1146px"><i class="cb"></i>
<b style="left:22.5px;letter-spacing:.04px">SlootyVaultSuit.esp</b>
<b style="left:362.3px;letter-spacing:.32px">162</b>
<b style="left:464.6px;letter-spacing:-.17px">FE 08A</b>
<b style="left:705.6px;letter-spacing:.02px">Wed May 29 01:46:3...</b>
<b style="left:840.9px;letter-spacing:.04px">18.7 KB</b>
<b style="left:1015.6px;letter-spacing:-.05px">5BEB3...</b>
</div>
<div class="r lf k" style="top:1165px"><i class="cb"></i>
<b style="left:22.5px;letter-spacing:.15px">Devious Devices.esp</b>
<b style="left:362.3px;letter-spacing:.32px">163</b>
<b style="left:464.6px;letter-spacing:0px">CF</b>
<b style="left:705.6px;letter-spacing:.03px">Tue May 28 12:57:5...</b>
<b style="left:840.9px;letter-spacing:.08px">205.3 KB</b>
<b style="left:915.6px;letter-spacing:.14px">Krazyman999...</b>
<b style="left:1015.6px;letter-spacing:-.04px">B1F18...</b>
</div>
<div class="r lf" style="top:1184px"><i class="cb"></i>
<b style="left:22.5px;letter-spacing:.02px">FO4Fixes.esp</b>
<b style="left:362.3px;letter-spacing:.32px">164</b>
<b style="left:464.6px;letter-spacing:-.01px">FE 08B</b>
<b style="left:705.6px;letter-spacing:.01px">Sat May 25 12:43:17...</b>
<b style="left:840.9px;letter-spacing:-0px">1.3 MB</b>
<b style="left:1015.6px;letter-spacing:-.42px">0AA4A...</b>
</div>
<div class="r lf" style="top:1203px"><i class="cb"></i>
<b style="left:22.5px;letter-spacing:.12px">CSCCPatch.esp</b>
<b style="left:362.3px;letter-spacing:.32px">165</b>
<b style="left:464.6px;letter-spacing:.05px">FE 08C</b>
<b style="left:705.6px;letter-spacing:-.05px">Mon Oct  9 23:56:01 ...</b>
<b style="left:840.9px;letter-spacing:.04px">27.6 MB</b>
<b style="left:1015.6px;letter-spacing:-.17px">EA6E4...</b>
</div>
<div class="r lf" style="top:1222px"><i class="cb"></i>
<b style="left:22.5px;letter-spacing:.25px">CompanionFix.esp</b>
<b style="left:362.3px;letter-spacing:.32px">166</b>
<b style="left:464.6px;letter-spacing:.05px">FE 08D</b>
<b style="left:705.6px;letter-spacing:.03px">Thu Jul 27 18:28:07 ...</b>
<b style="left:840.9px;letter-spacing:-.01px">8.7 KB</b>
<b style="left:1015.6px;letter-spacing:-.09px">C0A53...</b>
</div>
<div class="r lf" style="top:1241px"><i class="cb"></i>
<b style="left:22.5px;letter-spacing:.18px">DLCLair.esp</b>
<b style="left:362.3px;letter-spacing:.32px">167</b>
<b style="left:464.6px;letter-spacing:-.01px">FE 08E</b>
<b style="left:705.6px;letter-spacing:-.02px">Sat Jun  1 22:23:43 ...</b>
<b style="left:840.9px;letter-spacing:.04px">72.7 KB</b>
<b style="left:1015.6px;letter-spacing:.04px">3244E...</b>
</div>
<div class="r lf" style="top:1260px"><i class="cb y"></i>
<b style="left:22.5px;letter-spacing:.12px">M8r Complex Sorter.esp</b>
<b style="left:362.3px;letter-spacing:.32px">168</b>
<b style="left:464.6px;letter-spacing:-.06px">FE 08F</b>
<b style="left:705.6px;letter-spacing:-.02px">Sat Jun  1 18:33:55 ...</b>
<b style="left:840.9px;letter-spacing:-0px">7.3 MB</b>
<b style="left:915.6px;letter-spacing:.19px">R88_SimpleS...</b>
<b style="left:1015.6px;letter-spacing:-.05px">BEB97...</b>
</div>
<div class="selbg" style="top:1279px;width:1074.4px"></div>
<div class="r lf s" style="top:1279px"><i class="cb"></i>
<b style="left:22.5px;letter-spacing:.07px">Bashed Patch, 0.esp</b>
<b style="left:362.3px;letter-spacing:.32px">169</b>
<b style="left:464.6px;letter-spacing:.05px">FE 090</b>
<b style="left:705.6px;letter-spacing:-.02px">Sat Jun  1 15:41:25 ...</b>
<b style="left:840.9px;letter-spacing:.04px">58.2 KB</b>
<b style="left:915.6px;letter-spacing:-.22px">BASHED PAT...</b>
<b style="left:1015.6px;letter-spacing:.08px">D63C1...</b>
</div>
<div class="a" style="left:1074.4px;top:0;width:17.2px;bottom:0;background:#f0f0f0"></div>
<div class="a" style="left:1074.5px;top:1051px;width:15.7px;height:235px;background:#cdcdcd"></div>
<svg class="a" style="left:1078.2px;top:6.500px" width="9" height="6" viewBox="0 0 9 6"><path d="M.8 5L4.500 1.300L8.200 5" fill="none" stroke="#2a2a2a" stroke-width="1.700"/></svg>
<svg class="a" style="left:1078.2px;top:1292px" width="9" height="6" viewBox="0 0 9 6"><path d="M.8 1L4.500 4.700L8.200 1" fill="none" stroke="#2a2a2a" stroke-width="1.700"/></svg>
</div>
<div class="t" style="left:1102px;top:67.3px;letter-spacing:-.07px;transform:scaleX(0.975);transform-origin:0 0;">File:</div>
<div class="t" style="left:2400px;width:155.500px;top:67.300px;text-align:right;letter-spacing:-.28px">v1.00</div>
<div class="inp" style="left:1102px;top:87px;width:1453.7px">
<div class="t" style="left:5.5px;top:2.1px;letter-spacing:-.16px;">Bashed Patch, 0.esp</div>
</div>
<div class="t" style="left:1102px;top:114.3px;letter-spacing:.07px;transform:scaleX(1.022);transform-origin:0 0;">Author - [12/511 bytes]:</div>
<div class="inp" style="left:1102px;top:134px;width:1453.7px">
<div class="t" style="left:5.5px;top:1.2px;letter-spacing:-.22px;transform:scaleX(0.959);transform-origin:0 0;">BASHED PATCH</div>
</div>
<div class="t" style="left:1102px;top:161.3px;letter-spacing:.17px;transform:scaleX(1.050);transform-origin:0 0;">Modified:</div>
<div class="inp" style="left:1102px;top:181px;width:1429.7px;height:24px">
<div class="t" style="left:5.5px;top:1.6px;letter-spacing:-.15px;transform:scaleX(0.960);transform-origin:0 0;">Sat Jun  1 15:41:25 2024</div>
</div>
<div class="btn" style="left:2533.300px;top:181.500px;width:21.500px;height:22.500px"><svg class="a" style="left:2.500px;top:2px" width="14.600" height="16.600" viewBox="0 0 13 14"><path d="M0 2h13v12h-13z" fill="#111"/><path d="M2.500 0v3M10.500 0v3" stroke="#111" stroke-width="2"/><g fill="#e1e1e1"><rect x="1.500" y="5.500" width="2.600" height="2.600"/><rect x="5.200" y="5.500" width="2.600" height="2.600"/><rect x="8.900" y="5.500" width="2.600" height="2.600"/><rect x="1.500" y="9.500" width="2.600" height="2.600"/><rect x="5.200" y="9.500" width="2.600" height="2.600"/><rect x="8.900" y="9.500" width="2.600" height="2.600"/></g></svg></div>
<div class="t" style="left:1102px;top:209.3px;letter-spacing:.11px;">Description - [131/511 bytes]:</div>
<div class="inp" style="left:1102px;top:228.800px;width:1453.7px;height:93.400px">
<div class="a" style="right:0;top:0;bottom:0;width:17.300px;background:#f0f0f0"></div>
<div class="t" style="left:2.2px;top:2.5px;letter-spacing:-.1px;transform:scaleX(0.974);transform-origin:0 0;">Updated: Sat Jun  1 16:41:38 2024</div>
<div class="t" style="left:2.2px;top:32px;letter-spacing:-.16px;">Records Changed: 161</div>
<div class="t" style="left:2.2px;top:47.2px;letter-spacing:.03px;">This patch has been automatically ESL-flagged to save a load order slot.</div>
<svg class="a" style="right:4.700px;top:7.500px" width="9" height="6" viewBox="0 0 9 6"><path d="M.8 5L4.500 1.300L8.200 5" fill="none" stroke="#b4b4b4" stroke-width="1.500"/></svg>
<svg class="a" style="right:4.700px;bottom:6px" width="9" height="6" viewBox="0 0 9 6"><path d="M.8 1L4.500 4.700L8.200 1" fill="none" stroke="#b4b4b4" stroke-width="1.500"/></svg>
</div>
<div class="t" style="left:1102px;top:327.3px;letter-spacing:-.06px;">Masters:</div>
<div class="lv" style="left:1101.7px;top:347.3px;width:560px;height:998.8px;border-color:#abadb3">
<div class="hd">
<div class="t" style="left:7.3px;top:4.6px;letter-spacing:-.07px;transform:scaleX(0.978);transform-origin:0 0;">File</div>
<div class="t" style="left:265.6px;top:4.6px;letter-spacing:.21px;transform:scaleX(1.052);transform-origin:0 0;">MI</div>
<div class="t" style="left:345.6px;top:4.6px;letter-spacing:-.04px;">Current LO</div>
<div class="vs" style="left:259.0px"></div>
<div class="vs" style="left:339.0px"></div>
<svg class="a" style="left:295.6px;top:4px" width="10" height="7" viewBox="0 0 10 7"><path d="M1 5.400L5 1.400L9 5.400" fill="none" stroke="#111" stroke-width="1.600"/></svg>
</div>
<div class="vl" style="left:259.0px"></div>
<div class="vl" style="left:339.0px"></div>
<div class="r lf" style="top:25px;color:#0000ff"><i class="cb bl" style="left:6.200px"></i><b style="left:23px;letter-spacing:.19px">Fallout4.esm</b><b style="left:266.0px;letter-spacing:.32px">00</b><b style="left:346.0px;letter-spacing:.32px">00</b></div>
<div class="r lf" style="top:44px;color:#0000ff"><i class="cb bl" style="left:6.200px"></i><b style="left:23px;letter-spacing:.25px">DLCRobot.esm</b><b style="left:266.0px;letter-spacing:.32px">01</b><b style="left:346.0px;letter-spacing:.32px">01</b></div>
<div class="r lf" style="top:63px;color:#0000ff"><i class="cb" style="left:6.200px"></i><b style="left:23px;letter-spacing:.22px">DLCCoast.esm</b><b style="left:266.0px;letter-spacing:.32px">02</b><b style="left:346.0px;letter-spacing:.32px">03</b></div>
<div class="r lf" style="top:82px;color:#0000ff"><i class="cb" style="left:6.200px"></i><b style="left:23px;letter-spacing:.24px">DLCNukaWorld.esm</b><b style="left:266.0px;letter-spacing:.32px">03</b><b style="left:346.0px;letter-spacing:.32px">06</b></div>
<div class="r lf" style="top:101px;color:#0000ff"><i class="cb" style="left:6.200px"></i><b style="left:23px;letter-spacing:.09px">Unofficial Fallout 4 Patch.esp</b><b style="left:266.0px;letter-spacing:.32px">04</b><b style="left:346.0px;letter-spacing:.32px">19</b></div>
<div class="r lf" style="top:120px;color:#0000ff"><i class="cb" style="left:6.200px"></i><b style="left:23px;letter-spacing:.14px">HN66Fo4_EasyGirl_BS.esp</b><b style="left:266.0px;letter-spacing:.32px">05</b><b style="left:346.0px;letter-spacing:.16px">2E</b></div>
<div class="r lf" style="top:139px;color:#000"><i class="cb" style="left:6.200px"></i><b style="left:23px;letter-spacing:.17px">Hunter of the Commonwealth.esp</b><b style="left:266.0px;letter-spacing:.32px">06</b><b style="left:346.0px;letter-spacing:.33px">5D</b></div>
<div class="r lf" style="top:158px;color:#000"><i class="cb" style="left:6.200px"></i><b style="left:23px;letter-spacing:.19px">WorkshopRearranged.esp</b><b style="left:266.0px;letter-spacing:.32px">07</b><b style="left:346.0px;letter-spacing:.32px">72</b></div>
<div class="r lf" style="top:177px;color:#009900"><i class="cb" style="left:6.200px"></i><b style="left:23px;letter-spacing:.11px">ErectionFix_SilverPerv.esp</b><b style="left:266.0px;letter-spacing:.32px">08</b><b style="left:346.0px;letter-spacing:-1.01px">AA</b></div>
<div class="r lf" style="top:196px;color:#000"><i class="cb" style="left:6.200px"></i><b style="left:23px;letter-spacing:.24px">Commonwealth Captives.esp</b><b style="left:266.0px;letter-spacing:.32px">09</b><b style="left:346.0px;letter-spacing:.16px">B4</b></div>
<div class="r lf" style="top:215px;color:#000"><i class="cb" style="left:6.200px"></i><b style="left:23px;letter-spacing:-.03px">AA HotC - Standalone - SE.esp</b><b style="left:266.0px;letter-spacing:-.34px">0A</b><b style="left:346.0px;letter-spacing:.16px">B5</b></div>
<div class="r lf" style="top:234px;color:#000"><i class="cb" style="left:6.200px"></i><b style="left:23px;letter-spacing:.03px">AA FusionCityRising.esp</b><b style="left:266.0px;letter-spacing:.16px">0B</b><b style="left:346.0px;letter-spacing:.33px">CD</b></div>
<div class="r lf" style="top:253px;color:#000"><i class="cb" style="left:6.200px"></i><b style="left:23px;letter-spacing:.02px">AA FusionCityRising - HotC.esp</b><b style="left:266.0px;letter-spacing:.33px">0C</b><b style="left:346.0px;letter-spacing:.16px">CE</b></div>
<div class="r lf" style="top:272px;color:#000"><i class="cb" style="left:6.200px"></i><b style="left:23px;letter-spacing:.08px">OutcastsAndRemnants.esp</b><b style="left:266.0px;letter-spacing:.33px">0D</b><b style="left:346.0px;letter-spacing:0px">CF</b></div>
<div class="r lf" style="top:291px;color:#e236c5"><i class="cb" style="left:6.200px"></i><b style="left:23px;letter-spacing:.14px">Ber92.esp</b><b style="left:266.0px;letter-spacing:.16px">0E</b><b style="left:346.0px;letter-spacing:.32px">135</b></div>
<div class="r lf" style="top:310px;color:#e236c5"><i class="cb" style="left:6.200px"></i><b style="left:23px;letter-spacing:.18px">Commonwealth Captives NPC Patch.esp</b><b style="left:266.0px;letter-spacing:-.01px">0F</b><b style="left:346.0px;letter-spacing:.32px">139</b></div>
<div class="r lf" style="top:329px;color:#e236c5"><i class="cb" style="left:6.200px"></i><b style="left:23px;letter-spacing:.11px">FCR HOTC Clothing Replacer.esp</b><b style="left:266.0px;letter-spacing:.32px">10</b><b style="left:346.0px;letter-spacing:.33px">13D</b></div>
<div class="r lf" style="top:348px;color:#e236c5"><i class="cb" style="left:6.200px"></i><b style="left:23px;letter-spacing:.11px">NewFace_Settlers.esp</b><b style="left:266.0px;letter-spacing:.27px">11</b><b style="left:346.0px;letter-spacing:.32px">149</b></div>
<div class="r lf" style="top:367px;color:#e236c5"><i class="cb" style="left:6.200px"></i><b style="left:23px;letter-spacing:.14px">Dank_ECO-INNR.esp</b><b style="left:266.0px;letter-spacing:.32px">12</b><b style="left:346.0px;letter-spacing:-.12px">15A</b></div>
</div>
<div class="btn dis" style="left:1102.7px;top:1350.700px;width:73px;height:21.500px">
<div class="t" style="left:23.5px;top:1.8px;letter-spacing:-.26px;transform:scaleX(0.945);transform-origin:0 0;">Save</div>
</div>
<div class="btn dis" style="left:1181.7px;top:1350.700px;width:73.5px;height:21.500px">
<div class="t" style="left:18.25px;top:1.8px;letter-spacing:-.18px;">Cancel</div>
</div>
<div class="t" style="left:1666px;top:331.3px;letter-spacing:-.15px;transform:scaleX(0.963);transform-origin:0 0;">Bash Tags:</div>
<div class="a" style="left:1666px;top:355px;width:889.500px;height:1017.500px;background:#f0f0f0;border:1px solid #828790;box-shadow:inset 0 0 0 1px #fff"></div>
<div class="btn" style="left:2509.300px;top:328.300px;width:21.700px;height:21.700px"><svg class="a" style="left:3px;top:3.300px" width="14" height="14" viewBox="0 0 14 14"><path d="M7 .3v13.400M.3 7h13.400" stroke="#000" stroke-width="2.300"/></svg></div>
<div class="btn" style="left:2533.300px;top:328.300px;width:21.700px;height:21.700px"><svg class="a" style="left:3px;top:3.300px" width="14" height="14" viewBox="0 0 14 14"><path d="M.3 7h13.400" stroke="#000" stroke-width="2.300"/></svg></div>
<div id="status" class="a">
<div class="ssep" style="left:249px"></div><div class="ssep" style="left:2251px"></div>
<div class="t" style="left:254px;top:8.1px;letter-spacing:0px;">Copies list of Bashed Patch, 0.esp&#x27;s masters to the clipboard.</div>
<div class="t" style="left:2256px;top:8.1px;letter-spacing:-.1px;transform:scaleX(0.974);transform-origin:0 0;">Mods: 362/362 (ESP/M: 217, ESL: 145)</div>
<svg class="a" style="left:4px;top:7.2px" width="16" height="16" viewBox="0 0 16 16"><rect x="1.400" y="1.600" width="13" height="13.400" fill="#c0f8c0" stroke="#3c3c3c" stroke-width="1.500"/><path d="M3.600 8.600L6.400 11.600L12.600 3.800" fill="none" stroke="#0a5c0a" stroke-width="2.300"/></svg>
<svg class="a" style="left:28px;top:7.2px" width="16" height="16" viewBox="0 0 16 16"><rect x="1.400" y="1.600" width="13" height="13.400" fill="#ff9696" stroke="#3c3c3c" stroke-width="1.500"/></svg>
<svg class="a" style="left:51.7px;top:6.4px" width="17" height="17" viewBox="0 0 17 17"><circle cx="8.200" cy="8.200" r="8" fill="#3d97ea"/><path d="M10.800 -.2L10.300 5.800L16.600 5.200L11 8.600L13.200 16L8 11.400L3.600 16.600L5 10.600L-.2 11.600L5.200 7.600L2.800 .8L8 5.600Z" fill="#f2de4a"/><ellipse cx="8" cy="8.800" rx="3.700" ry="4.300" fill="#e6d2b8"/><path d="M4.600 6.800C5.500 3.800 10.500 3.600 11.600 7C10 5.600 6.500 5.600 4.600 6.800Z" fill="#c9a534"/><circle cx="6.600" cy="8.600" r=".7" fill="#444"/><circle cx="9.600" cy="8.600" r=".7" fill="#444"/><path d="M6.300 10.800Q8 12.200 9.800 10.800" stroke="#7a5a48" stroke-width=".7" fill="none"/></svg>
<svg class="a" style="left:76.3px;top:7.2px" width="16" height="16" viewBox="0 0 16 16"><path d="M3.600 .8H13.800V11.200H3.800A1.600 1.600 0 0 0 3.800 14.400H13.800V15.600H3.600A2.800 2.800 0 0 1 .8 12.800V3.600A2.800 2.800 0 0 1 3.600 .8Z" fill="#000"/><path d="M4.400 12.300H13.400V13.500H4.400Z" fill="#000" opacity=".15"/><path d="M4.800 4H12.200M4.800 6.600H12.200" stroke="#fff" stroke-width="1.100"/><path d="M3.200 12.800H13.200" stroke="#fff" stroke-width="1.300"/></svg>
<svg class="a" style="left:99.8px;top:7.2px" width="16" height="16" viewBox="0 0 16 16"><rect x="2" y="2" width="11.600" height="13.200" rx="1.800" fill="#f4f4f4" stroke="#3a3a3a" stroke-width="1.300"/><rect x="5" y=".6" width="5.600" height="2.800" rx="1" fill="#3a3a3a"/><path d="M4.800 6L5.800 7L7.300 5M4.800 9.300L5.800 10.300L7.300 8.300" stroke="#000" stroke-width="1" fill="none"/><path d="M8.300 6.200H11.200M8.300 9.500H11.200" stroke="#000" stroke-width="1.100"/><rect x="5" y="11.800" width="1.800" height="1.800" fill="#000"/></svg>
<svg class="a" style="left:124px;top:7.2px" width="16" height="16" viewBox="0 0 16 16"><path d="M5.67 0.45 L10.33 0.45 L10.78 3.14 L10.82 3.16 L13.37 2.20 L15.70 6.25 L13.60 7.98 L13.60 8.02 L15.70 9.75 L13.37 13.80 L10.82 12.84 L10.78 12.86 L10.33 15.55 L5.67 15.55 L5.22 12.86 L5.18 12.84 L2.63 13.80 L0.30 9.75 L2.40 8.02 L2.40 7.98 L0.30 6.25 L2.63 2.20 L5.18 3.16 L5.22 3.14Z" fill="#000" stroke="#000" stroke-width="1.200" stroke-linejoin="round"/><circle cx="8" cy="8" r="2.500" fill="#f0f0f0"/></svg>
<svg class="a" style="left:148px;top:7.2px" width="16" height="16" viewBox="0 0 16 16"><circle cx="8" cy="8" r="8" fill="#000"/><text x="8" y="12.200" text-anchor="middle" font-family="Liberation Sans,sans-serif" font-weight="bold" font-size="11.500" fill="#fff">?</text></svg>
<svg class="a" style="left:172px;top:7.2px" width="16" height="16" viewBox="0 0 16 16"><rect x=".5" y=".8" width="12" height="14.800" fill="#e6e6e6"/><rect x="1.300" y="1.300" width="10.600" height="9" fill="#2a68d4"/><path d="M11.900 1.300V10.300H3Z" fill="#7aaceb"/><path d="M11.900 4.500V10.300H6.500Z" fill="#dbe9fb"/><rect x="1.300" y="10.600" width="10.600" height="2.600" fill="#0b1a66"/><path d="M3 15.500L5 11.500L14.500 4.200L15.800 5.400L6.500 13.500Z" fill="#d0283c"/><path d="M3 15.500L5 11.500L6.500 13.500Z" fill="#8c8c8c"/></svg>
<svg class="a" style="left:196px;top:7.2px" width="16" height="16" viewBox="0 0 16 16"><path d="M.8 2H8.500L11.500 5V15.500H.8Z" fill="#f2f2f2" stroke="#bdbdbd" stroke-width=".6"/><path d="M1 8.500C3 5 6 4.500 8 6.500C9.500 6 11 7 11.300 9V15.300H1Z" fill="#8a9a58"/><path d="M1 9.500C4 7.500 8 8 11.300 10.500V15.300H1Z" fill="#4fc22a"/><path d="M1 13C5 11.500 8 12 11.300 13.500V15.300H1Z" fill="#2f9e18"/><path d="M9.500 12L10.200 9.500L14.600 1L15.900 1.700L11.500 10.300Z" fill="#f0c24a"/><path d="M14.600 1L15.900 1.700L15.500 .4Z" fill="#d66"/></svg>
<svg class="a" style="left:220px;top:6.4px" width="17" height="17" viewBox="0 0 17 17"><path d="M5 .8H12L16.300 5V16H5Z" fill="#bfe0f7" stroke="#8fb8d8" stroke-width=".6"/><path d="M12 .8V5H16.300Z" fill="#e8f4fc"/><rect x="6" y="6.200" width="9.800" height="4.800" fill="#f6c64a"/><path d="M.3 6.600H4V4.200L8.600 8.600L4 13V10.600H.3Z" fill="#f08a2a"/></svg>
</div>
<div id="taskbar" class="a">
<div class="a" style="left:197.800px;top:0;width:48px;height:40px;background:#064b84"></div>
<div class="ul" style="left:55px;width:40px"></div>
<div class="ul" style="left:104px;width:40px"></div>
<div class="ul" style="left:153px;width:40px"></div>
<div class="ul" style="left:197.8px;width:48px"></div>
<svg class="a" style="left:15.500px;top:12px" width="17" height="17" viewBox="0 0 17 17"><path d="M0 2.400L7 1.400V8H0ZM8 1.250L17 0V8H8ZM0 9H7V15.600L0 14.600ZM8 9H17V17L8 15.750Z" fill="#fff"/></svg>
<svg class="a" style="left:61px;top:6.300px" width="28" height="28" viewBox="0 0 28 28"><circle cx="14" cy="14" r="11.500" fill="none" stroke="#dc2049" stroke-width="2"/><ellipse cx="14.200" cy="14" rx="6.300" ry="11" fill="none" stroke="#dc2049" stroke-width="1.500"/><path d="M10.200 5.500C7 9.500 7 18.500 10.200 22.500" fill="none" stroke="#dc2049" stroke-width="1.200"/></svg>
<svg class="a" style="left:112px;top:8px" width="24" height="24" viewBox="0 0 24 24"><circle cx="12" cy="12" r="11.700" fill="#5865f2"/><path d="M6 8.200C8 7 10 6.800 10.400 7.400L10 8C11.300 7.800 12.700 7.800 14 8L13.600 7.400C14 6.800 16 7 18 8.200C19.500 11 20 14 19.600 16C18 17.300 16.500 17.600 16 17.400L15.300 16.200C13 17 11 17 8.700 16.200L8 17.400C7.500 17.600 6 17.300 4.400 16C4 14 4.500 11 6 8.200Z" fill="#fff"/><ellipse cx="9.600" cy="12.600" rx="1.500" ry="1.700" fill="#5865f2"/><ellipse cx="14.400" cy="12.600" rx="1.500" ry="1.700" fill="#5865f2"/></svg>
<svg class="a" style="left:161.800px;top:8.200px" width="23" height="22" viewBox="0 0 24 22"><path d="M1 2.500H8L9.500 4.500H1Z" fill="#e8a820"/><path d="M1 3.500H23V19.500H1Z" fill="#f8d25c"/><path d="M1 4.500H23V6.500H1Z" fill="#fbe08a"/><path d="M5 12H19V19.500H5Z" fill="#3b9be8"/><path d="M8.500 15.500H15.500V19.500H8.500Z" fill="#f8d25c"/></svg>
<svg class="a" style="left:212px;top:8.300px" width="21.300" height="22.400" viewBox="0 0 21.300 22.400"><path d="M1.5 .5L20.9 .3L20.9 6.2C19.5 7.2 17.5 7.5 15.9 7.4C17.3 6.3 17.8 4.6 16.7 2.6L7.4 2.4L13.9 11.3C14.2 12.2 14 13 13.5 13.6L.8 22.4L0 21.3L.2 8L1.1 8C1.6 11.5 2.6 14 4.1 15.7C5 16.6 5.8 16.6 6.3 16.3C7.8 15.6 8.6 14.8 8.9 13.9C9.1 13.2 9 12.400 8.500 11.700L3.700 5.700C3.100 4.600 2.900 3.500 3 2.400Z" fill="#d40a0a"/></svg>
<svg class="a" style="left:2340.500px;top:16px" width="13" height="8" viewBox="0 0 13 8"><path d="M.8 7L6.500 1.300L12.200 7" fill="none" stroke="#fff" stroke-width="1.300"/></svg>
<svg class="a" style="left:2362.500px;top:13px" width="17" height="15" viewBox="0 0 17 15"><g fill="none" stroke="#fff" stroke-width="1.100"><rect x="4.500" y="1.500" width="11.500" height="8"/><path d="M10 9.500V13M6.500 13.500H13.500M2.500 .5V12.500H6"/><rect x=".6" y=".6" width="3.600" height="3" fill="#0b1b28"/></g></svg>
<svg class="a" style="left:2386.500px;top:12.500px" width="17" height="15" viewBox="0 0 17 15"><g fill="none" stroke="#fff" stroke-width="1.100"><path d="M.8 5H3.500L7 1.500V13.500L3.500 10H.8Z"/><path d="M9 5.500C10 6.700 10 8.300 9 9.500"/><path d="M11 3.800C12.800 6 12.800 9 11 11.200" opacity=".7"/><path d="M13.200 2C15.800 5.200 15.800 9.800 13.200 13" opacity=".35"/></g></svg>
<div class="t" style="left:2413.500px;top:11.500px;font-size:11.800px;letter-spacing:-.3px">РУС</div>
<div class="t" style="left:2451.500px;top:2.400px;letter-spacing:-.2px">10:09 PM</div>
<div class="t" style="left:2451.500px;top:20.400px;letter-spacing:.11px">6/1/2024</div>
<svg class="a" style="left:2518px;top:11.500px" width="26" height="26" viewBox="0 0 26 26"><path d="M.8 .8H16.800V12.500H8L4.800 15.600V12.500H.8Z" fill="#fff"/><path d="M3 3.600H14.500M3 6.200H14.500M3 8.800H14.500" stroke="#9aa3ab" stroke-width="1.200"/><circle cx="16.600" cy="15.200" r="7.500" fill="#1667b3"/><text x="16.600" y="19.200" text-anchor="middle" font-family="Liberation Sans,sans-serif" font-size="11" fill="#fff">1</text></svg>
<div class="a" style="left:2555px;top:0;width:1px;height:40px;background:#4a5660"></div>
</div>
<div class="menu" style="left:75.2px;top:1038.3px;width:259.1px;height:320px">
<div class="mi" style="top:2px">
<div class="t" style="left:32px;top:2.6px;letter-spacing:-.08px;transform:scaleX(0.973);transform-origin:0 0;">File..</div>
<svg class="arr" viewBox="0 0 5 8"><path d="M.7 .7L4 4L.7 7.300" fill="none" stroke="#222" stroke-width="1.100"/></svg>
</div>
<div class="msep" style="top:27px"></div>
<div class="mi" style="top:31px">
<div class="t" style="left:32px;top:2.6px;letter-spacing:.02px;">Move To...</div>
</div>
<div class="mi" style="top:53px">
<div class="t" style="left:32px;top:2.6px;letter-spacing:-.11px;transform:scaleX(0.972);transform-origin:0 0;">Readme...</div>
</div>
<div class="mi dis" style="top:75px">
<div class="t" style="left:32px;top:2.6px;letter-spacing:-.01px;">Jump to Source</div>
</div>
<div class="mi hl" style="top:97px">
<div class="t" style="left:32px;top:2.6px;letter-spacing:.08px;transform:scaleX(1.028);transform-origin:0 0;">Info..</div>
<svg class="arr" viewBox="0 0 5 8"><path d="M.7 .7L4 4L.7 7.300" fill="none" stroke="#222" stroke-width="1.100"/></svg>
</div>
<div class="msep" style="top:122px"></div>
<div class="mi" style="top:126px">
<div class="t" style="left:32px;top:2.6px;letter-spacing:-.08px;">Check ESL Qualifications</div>
</div>
<div class="mi" style="top:148px">
<div class="t" style="left:32px;top:2.6px;letter-spacing:.01px;">Rebuild Patch...</div>
</div>
<div class="msep" style="top:173px"></div>
<div class="mi" style="top:177px">
<div class="t" style="left:32px;top:2.6px;letter-spacing:-.15px;">Add ESM Flag</div>
</div>
<div class="mi" style="top:199px">
<div class="t" style="left:32px;top:2.6px;letter-spacing:-.17px;transform:scaleX(0.961);transform-origin:0 0;">Remove ESL Flag</div>
</div>
<div class="mi" style="top:221px">
<div class="t" style="left:32px;top:2.6px;letter-spacing:-.18px;">Remove ESM Flag From Masters</div>
</div>
<div class="mi dis" style="top:243px">
<div class="t" style="left:32px;top:2.6px;letter-spacing:-.09px;">Create Dummy Masters...</div>
</div>
<div class="msep" style="top:268px"></div>
<div class="mi" style="top:272px">
<div class="t" style="left:32px;top:2.6px;letter-spacing:.17px;">Plugin..</div>
<svg class="arr" viewBox="0 0 5 8"><path d="M.7 .7L4 4L.7 7.300" fill="none" stroke="#222" stroke-width="1.100"/></svg>
</div>
<div class="mi" style="top:294px">
<div class="t" style="left:32px;top:2.6px;letter-spacing:.1px;">Advanced..</div>
<svg class="arr" viewBox="0 0 5 8"><path d="M.7 .7L4 4L.7 7.300" fill="none" stroke="#222" stroke-width="1.100"/></svg>
</div>
</div>
<div class="menu" style="left:328.2px;top:1132.8px;width:194.5px;height:167px">
<div class="mi" style="top:2px">
<div class="t" style="left:32.6px;top:3.1px;letter-spacing:-.11px;transform:scaleX(0.970);transform-origin:0 0;">List Bash Tags...</div>
</div>
<div class="mi" style="top:24px">
<div class="t" style="left:32.6px;top:3.1px;letter-spacing:.02px;">List Dependent...</div>
</div>
<div class="mi hl" style="top:46px">
<div class="t" style="left:32.6px;top:3.1px;letter-spacing:-.08px;">List Masters...</div>
</div>
<div class="mi" style="top:68px">
<div class="t" style="left:32.6px;top:3.1px;letter-spacing:.03px;">List Patch Config...</div>
</div>
<div class="msep" style="top:93px"></div>
<div class="mi" style="top:97px">
<div class="t" style="left:32.6px;top:3.1px;letter-spacing:-.09px;transform:scaleX(0.975);transform-origin:0 0;">Create LOOT Entry...</div>
</div>
<div class="mi" style="top:119px">
<div class="t" style="left:32.6px;top:3.1px;letter-spacing:.12px;">Copy Plugin Info...</div>
</div>
<div class="mi" style="top:141px">
<div class="t" style="left:32.6px;top:3.1px;letter-spacing:-.11px;">Details...</div>
</div>
</div>
</div></body></html>
